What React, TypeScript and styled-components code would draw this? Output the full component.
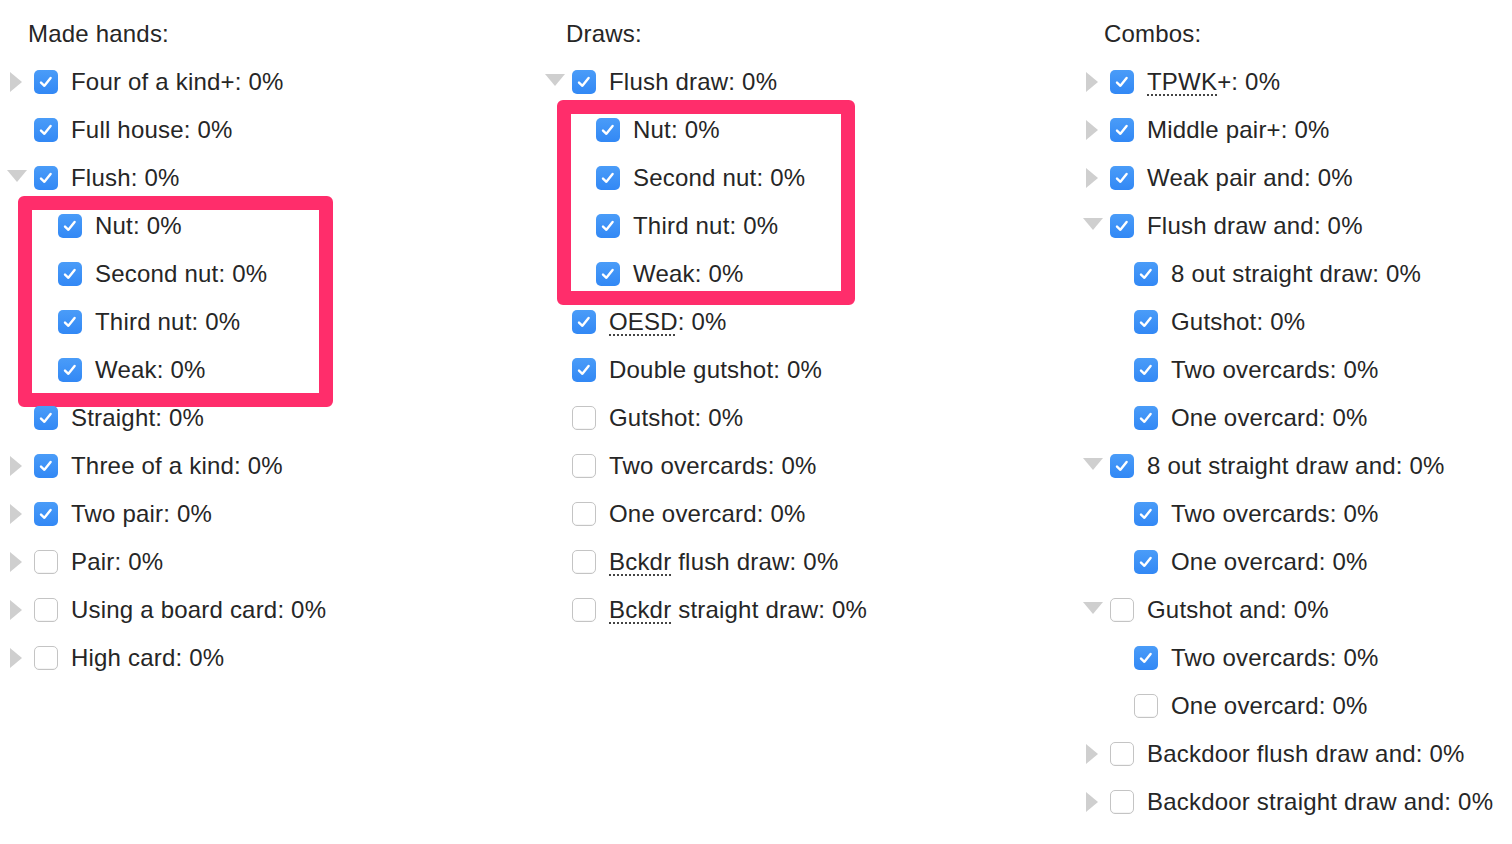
import React from "react";
import styled, { createGlobalStyle } from "styled-components";

const Global = createGlobalStyle`
  html, body { margin: 0; padding: 0; background: #ffffff; }
  body { font-family: "Liberation Sans", Arial, Helvetica, sans-serif; color: #262626; }
  * { box-sizing: border-box; }
`;

type Node = {
  label: string;
  abbr?: string;
  checked: boolean;
  toggle?: "open" | "closed";
  children?: Node[];
  highlight?: { top: number; left: number; width: number; height: number };
};

type Column = { title: string; items: Node[] };

const nuts = (): Node[] => [
  { label: "Nut: 0%", checked: true },
  { label: "Second nut: 0%", checked: true },
  { label: "Third nut: 0%", checked: true },
  { label: "Weak: 0%", checked: true },
];

const columns: Column[] = [
  {
    title: "Made hands:",
    items: [
      { label: "Four of a kind+: 0%", checked: true, toggle: "closed" },
      { label: "Full house: 0%", checked: true },
      {
        label: "Flush: 0%",
        checked: true,
        toggle: "open",
        children: nuts(),
        highlight: { top: -6, left: 18, width: 315, height: 211 },
      },
      { label: "Straight: 0%", checked: true },
      { label: "Three of a kind: 0%", checked: true, toggle: "closed" },
      { label: "Two pair: 0%", checked: true, toggle: "closed" },
      { label: "Pair: 0%", checked: false, toggle: "closed" },
      { label: "Using a board card: 0%", checked: false, toggle: "closed" },
      { label: "High card: 0%", checked: false, toggle: "closed" },
    ],
  },
  {
    title: "Draws:",
    items: [
      {
        label: "Flush draw: 0%",
        checked: true,
        toggle: "open",
        children: nuts(),
        highlight: { top: -6, left: 19, width: 298, height: 205 },
      },
      { abbr: "OESD", label: ": 0%", checked: true },
      { label: "Double gutshot: 0%", checked: true },
      { label: "Gutshot: 0%", checked: false },
      { label: "Two overcards: 0%", checked: false },
      { label: "One overcard: 0%", checked: false },
      { abbr: "Bckdr", label: " flush draw: 0%", checked: false },
      { abbr: "Bckdr", label: " straight draw: 0%", checked: false },
    ],
  },
  {
    title: "Combos:",
    items: [
      { abbr: "TPWK", label: "+: 0%", checked: true, toggle: "closed" },
      { label: "Middle pair+: 0%", checked: true, toggle: "closed" },
      { label: "Weak pair and: 0%", checked: true, toggle: "closed" },
      {
        label: "Flush draw and: 0%",
        checked: true,
        toggle: "open",
        children: [
          { label: "8 out straight draw: 0%", checked: true },
          { label: "Gutshot: 0%", checked: true },
          { label: "Two overcards: 0%", checked: true },
          { label: "One overcard: 0%", checked: true },
        ],
      },
      {
        label: "8 out straight draw and: 0%",
        checked: true,
        toggle: "open",
        children: [
          { label: "Two overcards: 0%", checked: true },
          { label: "One overcard: 0%", checked: true },
        ],
      },
      {
        label: "Gutshot and: 0%",
        checked: false,
        toggle: "open",
        children: [
          { label: "Two overcards: 0%", checked: true },
          { label: "One overcard: 0%", checked: false },
        ],
      },
      { label: "Backdoor flush draw and: 0%", checked: false, toggle: "closed" },
      { label: "Backdoor straight draw and: 0%", checked: false, toggle: "closed" },
    ],
  },
];

const Page = styled.div`
  display: grid;
  grid-template-columns: 538px 538px 436px;
  padding-top: 10px;
  width: 1512px;
  height: 844px;
  overflow: hidden;
`;

const Col = styled.div`
  display: flex;
  flex-direction: column;
`;

const Header = styled.div`
  height: 48px;
  display: flex;
  align-items: center;
  padding-left: 28px;
  font-size: 24px;
  letter-spacing: 0.2px;
  color: #262626;
`;

const Group = styled.div`
  position: relative;
  display: flex;
  flex-direction: column;
`;

const Row = styled.div<{ $depth: number }>`
  height: 48px;
  display: flex;
  align-items: center;
  padding-left: ${(p) => 34 + p.$depth * 24}px;
  position: relative;
  font-size: 24px;
  letter-spacing: 0.2px;
  white-space: nowrap;
`;

const ToggleSlot = styled.span<{ $depth: number }>`
  position: absolute;
  left: ${(p) => 4 + p.$depth * 24}px;
  top: 0;
  width: 26px;
  height: 48px;
  display: flex;
  align-items: center;
  justify-content: center;
`;

const ClosedArrow = styled.span`
  width: 0;
  height: 0;
  border-top: 10px solid transparent;
  border-bottom: 10px solid transparent;
  border-left: 12px solid #cfcfcf;
  margin-left: -2px;
`;

const OpenArrow = styled.span`
  width: 0;
  height: 0;
  border-left: 10px solid transparent;
  border-right: 10px solid transparent;
  border-top: 12px solid #cfcfcf;
  margin-top: -4px;
  margin-left: 0;
`;

const Box = styled.span<{ $on: boolean }>`
  flex: none;
  width: 24px;
  height: 24px;
  border-radius: 5px;
  display: flex;
  align-items: center;
  justify-content: center;
  background: ${(p) => (p.$on ? "linear-gradient(#4a9cf8, #3288f5)" : "#ffffff")};
  border: ${(p) => (p.$on ? "none" : "1px solid #c4c4c4")};
  box-shadow: ${(p) => (p.$on ? "none" : "inset 0 -1px 0 rgba(0,0,0,0.04)")};
  margin-right: 13px;
`;

const Label = styled.span`
  color: #262626;
  line-height: 1;
`;

const Abbr = styled.span`
  text-decoration: underline dotted #444;
  text-decoration-thickness: 2px;
  text-underline-offset: 4px;
`;

const Highlight = styled.div`
  position: absolute;
  border: 14px solid #ff2d6b;
  border-radius: 6px;
  pointer-events: none;
`;

const Check = () => (
  <svg width="18" height="18" viewBox="0 0 18 18">
    <path
      d="M4 9.6 L7.4 12.8 L13.6 5"
      fill="none"
      stroke="#ffffff"
      strokeWidth="2.4"
      strokeLinecap="round"
      strokeLinejoin="round"
    />
  </svg>
);

const Item: React.FC<{ node: Node; depth: number }> = ({ node, depth }) => (
  <>
    <Row $depth={depth}>
      {node.toggle && (
        <ToggleSlot $depth={depth}>
          {node.toggle === "open" ? <OpenArrow /> : <ClosedArrow />}
        </ToggleSlot>
      )}
      <Box $on={node.checked}>{node.checked && <Check />}</Box>
      <Label>
        {node.abbr && <Abbr>{node.abbr}</Abbr>}
        {node.label}
      </Label>
    </Row>
    {node.children && (
      <Group>
        {node.children.map((c, i) => (
          <Item key={i} node={c} depth={depth + 1} />
        ))}
        {node.highlight && (
          <Highlight
            style={{
              top: node.highlight.top,
              left: node.highlight.left,
              width: node.highlight.width,
              height: node.highlight.height,
            }}
          />
        )}
      </Group>
    )}
  </>
);

export default function App() {
  return (
    <>
      <Global />
      <Page>
        {columns.map((col) => (
          <Col key={col.title}>
            <Header>{col.title}</Header>
            {col.items.map((n, i) => (
              <Item key={i} node={n} depth={0} />
            ))}
          </Col>
        ))}
      </Page>
    </>
  );
}
